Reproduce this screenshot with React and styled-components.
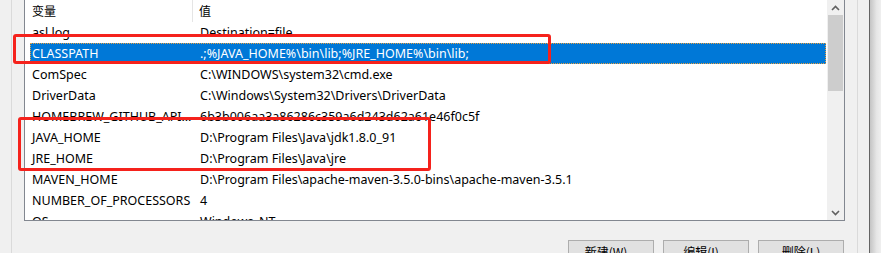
import React from 'react';
import styled, { createGlobalStyle } from 'styled-components';

const GlobalStyle = createGlobalStyle`
    html, body {
        margin: 0;
        padding: 0;
        background: #f0f0f0;
    }
    body {
        font-family: "Noto Sans", "Noto Sans CJK SC", sans-serif;
        font-size: 12.5px;
        color: #000;
    }
`;

const rows = [
    { name: 'asl.log', value: 'Destination=file' },
    { name: 'CLASSPATH', value: '.;%JAVA_HOME%\\bin\\lib;%JRE_HOME%\\bin\\lib;', selected: true },
    { name: 'ComSpec', value: 'C:\\WINDOWS\\system32\\cmd.exe' },
    { name: 'DriverData', value: 'C:\\Windows\\System32\\Drivers\\DriverData' },
    { name: 'HOMEBREW_GITHUB_API_TOKEN', value: '6b3b006aa3a86286c359a6d243d62a61e46f0c5f' },
    { name: 'JAVA_HOME', value: 'D:\\Program Files\\Java\\jdk1.8.0_91' },
    { name: 'JRE_HOME', value: 'D:\\Program Files\\Java\\jre' },
    { name: 'MAVEN_HOME', value: 'D:\\Program Files\\apache-maven-3.5.0-bins\\apache-maven-3.5.1' },
    { name: 'NUMBER_OF_PROCESSORS', value: '4' },
    { name: 'OS', value: 'Windows_NT' },
];

// 전체 창 영역
const Frame = styled.div`
    position: relative;
    display: flex;
    width: 881px;
    height: 253px;
    overflow: hidden;
    background: #f0f0f0;
`;

const LeftEdge = styled.div`
    width: 11px;
    flex: none;
    border-right: 1px solid #dadada;
`;

const Content = styled.div`
    display: flex;
    flex-direction: column;
    width: 821px;
    padding-left: 12px;
    flex: none;
`;

const RightEdge = styled.div`
    display: flex;
    flex: none;
    margin-left: 12px;

    .inner {
        width: 11px;
        border-left: 1px solid #dadada;
    }
    .frameLine {
        width: 1px;
        background: #646464;
    }
    .shadow {
        width: 11px;
        background: linear-gradient(to right, #c4c4c4, #e6e6e6 60%, #efefef);
    }
`;

const ListBox = styled.div`
    display: flex;
    height: 220px;
    border: 1px solid #828790;
    border-top: none;
    background: #fff;
`;

const ListBody = styled.div`
    flex: 1;
    overflow: hidden;
`;

const Header = styled.div`
    display: flex;
    height: 22px;
    width: 801px;
    border-right: 1px solid #e5e5e5;
`;

const HeaderCell = styled.div`
    box-sizing: border-box;
    width: ${(p) => (p.$w ? `${p.$w}px` : 'auto')};
    flex: ${(p) => (p.$w ? 'none' : '1')};
    padding-left: ${(p) => p.$pad}px;
    line-height: 21px;
    border-right: ${(p) => (p.$divider ? '1px solid #e5e5e5' : 'none')};
    font-family: "Noto Sans CJK SC", sans-serif;
    font-size: 12px;
`;

const Row = styled.div`
    display: flex;
    box-sizing: border-box;
    height: 21px;
    margin-left: 5px;
    width: 796px;
    line-height: 21px;
    background: ${(p) => (p.$selected ? '#0078d7' : 'transparent')};
    color: ${(p) => (p.$selected ? '#fff' : '#000')};
    outline: ${(p) => (p.$selected ? '1px dotted #e8a040' : 'none')};
    outline-offset: -1px;
`;

const NameCell = styled.div`
    box-sizing: border-box;
    width: 163px;
    flex: none;
    padding-left: 2px;
    white-space: nowrap;
    overflow: hidden;
    text-overflow: ellipsis;
`;

const ValueCell = styled.div`
    flex: 1;
    padding-left: 7px;
    white-space: nowrap;
    overflow: hidden;
`;

const ScrollBar = styled.div`
    display: flex;
    flex-direction: column;
    width: 17px;
    flex: none;
    background: #f0f0f0;
    margin-left: 1px;
`;

const ArrowBtn = styled.div`
    height: 15px;
    display: flex;
    align-items: center;
    justify-content: center;
`;

const Thumb = styled.div`
    height: 76px;
    margin: 0 1px;
    background: #cdcdcd;
`;

const Track = styled.div`
    flex: 1;
`;

const ButtonRow = styled.div`
    display: flex;
    justify-content: flex-end;
    gap: 9px;
    margin-top: 19px;
    padding-right: 1px;
`;

const Button = styled.div`
    box-sizing: border-box;
    width: 86px;
    height: 23px;
    flex: none;
    border: 1px solid #adadad;
    background: #e1e1e1;
    text-align: center;
    line-height: 21px;
    font-family: "Noto Sans CJK SC", sans-serif;
    font-size: 12px;
`;

// 빨간 강조 박스 (스크린샷 위에 그린 표시)
const Mark = styled.div`
    position: absolute;
    left: ${(p) => p.$x}px;
    top: ${(p) => p.$y}px;
    width: ${(p) => p.$w}px;
    height: ${(p) => p.$h}px;
    box-sizing: border-box;
    border: 3px solid #f5221c;
    border-radius: 3px;
    pointer-events: none;
`;

const Chevron = ({ up }) => (
    <svg width="9" height="6" viewBox="0 0 9 6">
        <path
            d={up ? 'M1 5 L4.5 1.5 L8 5' : 'M1 1 L4.5 4.5 L8 1'}
            fill="none"
            stroke="#606060"
            strokeWidth="1.6"
        />
    </svg>
);

const App = () => {
    return (
        <>
            <GlobalStyle />
            <Frame>
                <LeftEdge />
                <Content>
                    <ListBox>
                        <ListBody>
                            <Header>
                                <HeaderCell $w={168} $pad={7} $divider>变量</HeaderCell>
                                <HeaderCell $pad={6}>值</HeaderCell>
                            </Header>
                            {rows.map((v, i) => (
                                <Row key={i} $selected={v.selected}>
                                    <NameCell>{v.name}</NameCell>
                                    <ValueCell>{v.value}</ValueCell>
                                </Row>
                            ))}
                        </ListBody>
                        <ScrollBar>
                            <ArrowBtn><Chevron up /></ArrowBtn>
                            <Thumb />
                            <Track />
                            <ArrowBtn><Chevron /></ArrowBtn>
                        </ScrollBar>
                    </ListBox>
                    <ButtonRow>
                        <Button>新建(W)...</Button>
                        <Button>编辑(I)...</Button>
                        <Button>删除(L)</Button>
                    </ButtonRow>
                </Content>
                <RightEdge>
                    <div className="inner" />
                    <div className="frameLine" />
                    <div className="shadow" />
                </RightEdge>
                <Mark $x={13} $y={34} $w={538} $h={30} />
                <Mark $x={18} $y={117} $w={413} $h={54} />
            </Frame>
        </>
    );
};

export default App;
